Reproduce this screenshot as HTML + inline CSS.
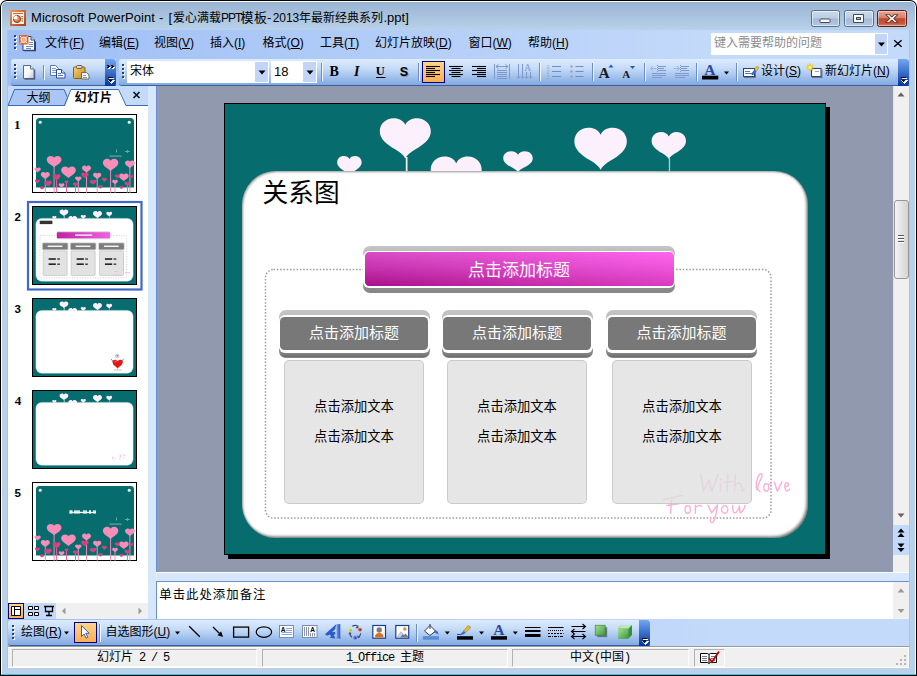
<!DOCTYPE html>
<html lang="zh-CN"><head><meta charset="utf-8"><title>Microsoft PowerPoint</title>
<style>
*{box-sizing:border-box;margin:0;padding:0}
html,body{width:917px;height:676px;overflow:hidden;background:#fff}
body{font-family:"Liberation Sans","Noto Sans CJK SC",sans-serif;font-size:12px;color:#000;position:relative}
#w div,#w span.t,#w svg.a{position:absolute}
#w{position:absolute;left:0;top:0;width:917px;height:676px;overflow:hidden}
span.t{white-space:nowrap;line-height:1;display:block}
u{text-decoration:underline;text-underline-offset:1px}

.tb{background:linear-gradient(#ddecfe 0%,#c6dcf8 35%,#81a9e2 100%);border-bottom:1px solid #3b619c}
.ovf{background:linear-gradient(#75a6f1 0%,#0035a0 100%)}
.sep{width:2px;border-left:1px solid #6a8ccb;border-right:1px solid #f1f9ff}
.sel{background:linear-gradient(#ffd58c,#ffad55);border:1px solid #000080}
.cell{background:#f0f0f0;border:1px solid;border-color:#b2b2b2 #fdfdfd #fdfdfd #b2b2b2}
.m{font-size:12px}
</style></head>
<body>
<div id="w">
<div style="left:0px;top:0px;width:917px;height:676px;background:#000;border-radius:7px 7px 0 0"></div>
<div style="left:1px;top:1px;width:915px;height:674px;background:#fff;border-radius:6px 6px 0 0"></div>
<div style="left:2px;top:2px;width:913px;height:672px;background:#b9d1ea;border-radius:5px 5px 0 0"></div>
<div style="left:2px;top:2px;width:913px;height:28px;background:linear-gradient(#98b3d1 0%,#a9c3df 50%,#b9d1ea 100%);border-radius:5px 5px 0 0"></div>
<div style="left:909px;top:30px;width:1px;height:638px;background:#aac4e2"></div>
<div style="left:1px;top:674px;width:915px;height:1px;background:#2fc8dc"></div>
<div style="left:7px;top:30px;width:1px;height:638px;background:#aac4e2"></div>
<svg class="a" style="left:10px;top:10px;" width="16" height="16" viewBox="0 0 16 16"><defs><linearGradient id="tig" x1="0" y1="0" x2="1" y2="1"><stop offset="0" stop-color="#f09860"/><stop offset="1" stop-color="#a83c14"/></linearGradient><radialGradient id="tir" cx=".4" cy=".35" r=".7"><stop offset="0" stop-color="#ffd0a8"/><stop offset="1" stop-color="#c85420"/></radialGradient></defs><rect x="0" y="0" width="16" height="16" fill="url(#tig)"/><rect x="2" y="2" width="12" height="12" fill="#fdf3ea"/><rect x="3" y="3" width="10" height="1" fill="#d2622c"/><circle cx="7" cy="9" r="3.6" fill="url(#tir)" stroke="#8c2c0c" stroke-width=".9"/><path d="M7 9V5.4A3.6 3.6 0 0 0 3.400 9z" fill="#fff"/><rect x="11.5" y="6" width="1.2" height="1.2" fill="#8c2c0c"/><rect x="11.5" y="8.2" width="1.2" height="1.2" fill="#8c2c0c"/><rect x="11.5" y="10.4" width="1.2" height="1.2" fill="#8c2c0c"/></svg>
<span class="t" style="left:31px;top:11px;font-size:13px;letter-spacing:.06px">Microsoft PowerPoint</span>
<span class="t" style="left:159px;top:11px;font-size:13px;">-</span>
<span class="t" style="left:168.5px;top:11px;font-size:13px;">[</span>
<span class="t" style="left:173px;top:11.5px;font-size:12px;">爱心满载</span>
<span class="t" style="left:221px;top:11.5px;font-size:12px;letter-spacing:-1px">PPT</span>
<span class="t" style="left:240.6px;top:11px;font-size:13px;letter-spacing:.3px">模板</span>
<span class="t" style="left:267px;top:11px;font-size:13px;">-</span>
<span class="t" style="left:272.8px;top:11.5px;font-size:12px;letter-spacing:-.1px">2013</span>
<span class="t" style="left:299px;top:11.5px;font-size:12px;">年最新经典系列</span>
<span class="t" style="left:383.5px;top:11px;font-size:13px;">.ppt]</span>
<div style="left:810.5px;top:10px;width:29.5px;height:17px;border:1px solid #56708f;border-radius:2.5px;box-shadow:inset 0 0 0 1px rgba(255,255,255,.55);background:linear-gradient(#cbd9ea 0%,#bccde2 48%,#a3b9d6 52%,#b3c8e2 100%)"></div>
<div style="left:843.5px;top:10px;width:30px;height:17px;border:1px solid #56708f;border-radius:2.5px;box-shadow:inset 0 0 0 1px rgba(255,255,255,.55);background:linear-gradient(#cbd9ea 0%,#bccde2 48%,#a3b9d6 52%,#b3c8e2 100%)"></div>
<div style="left:876.5px;top:10px;width:30.5px;height:17px;border:1px solid #5a1c14;border-radius:2.5px;box-shadow:inset 0 0 0 1px rgba(255,255,255,.4);background:linear-gradient(#e6a99a 0%,#d4806c 45%,#c1462c 52%,#c85a40 85%,#d88468 100%)"></div>
<svg class="a" style="left:810px;top:10px;" width="97" height="17" viewBox="0 0 97 17"><rect x="10" y="9" width="10" height="3.5" rx=".8" fill="#fff" stroke="#404a5c" stroke-width="1"/><path d="M43.5 4.500h10v8h-10z" fill="#fff" stroke="#404a5c" stroke-width="1"/><rect x="46.5" y="7.5" width="4" height="2" fill="#9fbcdc" stroke="#404a5c" stroke-width="1"/><path d="M76.3 4.200h3.200l2.300 2.600 2.300-2.600h3.200l-3.800 4.300 3.800 4.300h-3.200l-2.300-2.600-2.300 2.600h-3.200l3.800-4.300z" fill="#fff" stroke="#5c2a22" stroke-width=".9" stroke-linejoin="round" transform="translate(81.8 8.5) scale(1.12 .92) translate(-81.8 -8.5)"/></svg>
<div style="left:8px;top:30px;width:901px;height:29px;background:linear-gradient(90deg,#9ebef5 0px,#c4dafa 720px)"></div>
<svg class="a" style="left:14px;top:35px;" width="3" height="16" viewBox="0 0 3 16"><rect x="1" y="1" width="2" height="2" fill="#fff"/><rect x="0" y="0" width="2" height="2" fill="#274176"/><rect x="1" y="5" width="2" height="2" fill="#fff"/><rect x="0" y="4" width="2" height="2" fill="#274176"/><rect x="1" y="9" width="2" height="2" fill="#fff"/><rect x="0" y="8" width="2" height="2" fill="#274176"/><rect x="1" y="13" width="2" height="2" fill="#fff"/><rect x="0" y="12" width="2" height="2" fill="#274176"/></svg>
<svg class="a" style="left:19px;top:34px;" width="17" height="18" viewBox="0 0 17 18"><path d="M4 2.500h8l3.500 3.500v10.500h-11.500z" fill="#fff" stroke="#2c4470" stroke-width="1"/><path d="M12 2.500v3.500h3.500" fill="#dfe9f8" stroke="#2c4470" stroke-width="1"/><path d="M5 16.500h11.500v-9" fill="none" stroke="#2c4470" stroke-width="1.6"/><path d="M10 8.500h4M10 10.500h4M7 12.500h7M7 14.500h5" stroke="#6c8cc8" stroke-width="1"/><rect x="0" y="1" width="9.500" height="9.500" fill="#d86834"/><circle cx="4.7" cy="5.7" r="2.8" fill="#f4b088" stroke="#fff" stroke-width=".8"/><path d="M1 2l1.800 1.800M8.500 2l-1.800 1.800M1 9.500l1.800-1.800M8.500 9.500l-1.800-1.800" stroke="#fff" stroke-width="1"/></svg>
<span class="t m" style="left:45px;top:37px">文件(<u>F</u>)</span>
<span class="t m" style="left:99px;top:37px">编辑(<u>E</u>)</span>
<span class="t m" style="left:154px;top:37px">视图(<u>V</u>)</span>
<span class="t m" style="left:210px;top:37px">插入(<u>I</u>)</span>
<span class="t m" style="left:262.5px;top:37px">格式(<u>O</u>)</span>
<span class="t m" style="left:320px;top:37px">工具(<u>T</u>)</span>
<span class="t m" style="left:375px;top:37px">幻灯片放映(<u>D</u>)</span>
<span class="t m" style="left:468.5px;top:37px">窗口(<u>W</u>)</span>
<span class="t m" style="left:528px;top:37px">帮助(<u>H</u>)</span>
<div style="left:711px;top:33px;width:177px;height:22px;background:#fff"></div>
<div style="left:875px;top:34px;width:12px;height:20px;background:#c2d5f6"></div>
<svg class="a" style="left:875px;top:33px;" width="13" height="22" viewBox="0 0 13 22"><path d="M3 9.500h7l-3.500 4z" fill="#000"/></svg>
<span class="t" style="left:714px;top:37px;font-size:12px;color:#8c8c8c">键入需要帮助的问题</span>
<svg class="a" style="left:893px;top:39px;" width="10" height="9" viewBox="0 0 10 9"><path d="M1.200 1.200l7.400 6.600M8.600 1.200l-7.400 6.600" stroke="#000" stroke-width="1.4"/></svg>
<div style="left:8px;top:57px;width:901px;height:29px;background:linear-gradient(90deg,#9ebef5 0px,#c4dafa 720px)"></div>
<div class="tb" style="left:11px;top:59px;width:105px;height:27px;border-radius:3px 0 0 3px"></div>
<div class="ovf" style="left:105px;top:59px;width:11px;height:27px;border-radius:0 3px 3px 0"></div>
<svg class="a" style="left:105px;top:59px;" width="11" height="27" viewBox="0 0 11 27"><path d="M2 5h2v1h1v1h-1v1h-2v-1h1v-1h-1zM6 5h2v1h1v1h-1v1h-2v-1h1v-1h-1z" fill="#fff" transform="translate(1,2)"/><path d="M2 5h2v1h1v1h-1v1h-2v-1h1v-1h-1zM6 5h2v1h1v1h-1v1h-2v-1h1v-1h-1z" fill="#000" transform="translate(0,1)"/><path d="M4 19.500h5M3.500 21.500h6l-3 3z" fill="#fff" stroke="#fff" stroke-width="1"/><path d="M3 18.500h5" stroke="#000" stroke-width="1"/><path d="M3 20.500h5l-2.500 2.800z" fill="#000"/></svg>
<svg class="a" style="left:14px;top:64px;" width="3" height="16" viewBox="0 0 3 16"><rect x="1" y="1" width="2" height="2" fill="#fff"/><rect x="0" y="0" width="2" height="2" fill="#274176"/><rect x="1" y="5" width="2" height="2" fill="#fff"/><rect x="0" y="4" width="2" height="2" fill="#274176"/><rect x="1" y="9" width="2" height="2" fill="#fff"/><rect x="0" y="8" width="2" height="2" fill="#274176"/><rect x="1" y="13" width="2" height="2" fill="#fff"/><rect x="0" y="12" width="2" height="2" fill="#274176"/></svg>
<div class="tb" style="left:119px;top:59px;width:790px;height:27px;border-radius:3px 0 0 3px"></div>
<div class="ovf" style="left:898px;top:59px;width:11px;height:27px;border-radius:0 3px 3px 0"></div>
<svg class="a" style="left:898px;top:59px;" width="11" height="27" viewBox="0 0 11 27"><path d="M4 19.500h5M3.500 21.500h6l-3 3z" fill="#fff" stroke="#fff" stroke-width="1"/><path d="M3 18.500h5" stroke="#000" stroke-width="1"/><path d="M3 20.500h5l-2.500 2.800z" fill="#000"/></svg>
<svg class="a" style="left:122px;top:64px;" width="3" height="16" viewBox="0 0 3 16"><rect x="1" y="1" width="2" height="2" fill="#fff"/><rect x="0" y="0" width="2" height="2" fill="#274176"/><rect x="1" y="5" width="2" height="2" fill="#fff"/><rect x="0" y="4" width="2" height="2" fill="#274176"/><rect x="1" y="9" width="2" height="2" fill="#fff"/><rect x="0" y="8" width="2" height="2" fill="#274176"/><rect x="1" y="13" width="2" height="2" fill="#fff"/><rect x="0" y="12" width="2" height="2" fill="#274176"/></svg>
<div style="left:127px;top:61px;width:142px;height:22px;background:#fff"></div>
<div style="left:255px;top:62px;width:13px;height:20px;background:#c2d5f6"></div>
<svg class="a" style="left:255px;top:61px;" width="14" height="22" viewBox="0 0 14 22"><path d="M3.500 9.500h7l-3.500 4z" fill="#000"/></svg>
<span class="t" style="left:130px;top:65px;font-size:12px">宋体</span>
<div style="left:271px;top:61px;width:46px;height:22px;background:#fff"></div>
<div style="left:303px;top:62px;width:13px;height:20px;background:#c2d5f6"></div>
<svg class="a" style="left:303px;top:61px;" width="14" height="22" viewBox="0 0 14 22"><path d="M3.500 9.500h7l-3.500 4z" fill="#000"/></svg>
<span class="t" style="left:274px;top:65px;font-size:13px">18</span>
<div class="sep" style="left:320.5px;top:63px;width:2px;height:18px;"></div>
<div class="sep" style="left:418px;top:63px;width:2px;height:18px;"></div>
<div class="sep" style="left:539px;top:63px;width:2px;height:18px;"></div>
<div class="sep" style="left:591.5px;top:63px;width:2px;height:18px;"></div>
<div class="sep" style="left:644px;top:63px;width:2px;height:18px;"></div>
<div class="sep" style="left:696px;top:63px;width:2px;height:18px;"></div>
<div class="sep" style="left:735.5px;top:63px;width:2px;height:18px;"></div>
<div class="sel" style="left:422px;top:61px;width:23px;height:22px;"></div>
<span class="t" style="left:761px;top:65px;font-size:12px">设计(<u>S</u>)</span>
<span class="t" style="left:825px;top:65px;font-size:12px">新幻灯片(<u>N</u>)</span>
<div style="left:8px;top:86px;width:140px;height:533px;background:#fff"></div>
<div style="left:8px;top:86px;width:140px;height:20px;background:#c3daf9"></div>
<div style="left:148px;top:86px;width:9px;height:533px;background:#d6e6fb"></div>
<div style="left:156px;top:86px;width:1px;height:486px;background:#6b8fd6"></div>
<svg class="a" style="left:0px;top:0px;" width="160" height="110" viewBox="0 0 160 110"><path d="M8 105.500L14.500 89.500H64L67.500 97.500 64.500 105.500z" fill="#a9c6f5" stroke="#3c68b8" stroke-width="1"/><path d="M64.500 106L71 89.500H118.500L126 105.500H148" fill="none" stroke="#3c68b8" stroke-width="1"/><path d="M65 106L71.300 90H118.200L125.500 106z" fill="#fff"/><path d="M133.500 92l6 6M139.500 92l-6 6" stroke="#111" stroke-width="1.600"/></svg>
<span class="t" style="left:26.5px;top:92px;font-size:12px">大纲</span>
<span class="t" style="left:74.500px;top:92px;font-size:12px;letter-spacing:.8px;font-weight:bold">幻灯片</span>
<div style="left:157px;top:86px;width:736px;height:486px;background:#9099ae"></div>
<div style="left:893px;top:86px;width:16px;height:439px;background:#f0f0f0"></div>
<div style="left:893px;top:86px;width:1px;height:486px;background:#e3e3e3"></div>
<div style="left:894px;top:200px;width:14.5px;height:79px;border:1px solid #979797;border-radius:3px;background:linear-gradient(90deg,#f4f4f4,#e3e3e3 50%,#d4d4d4)"></div>
<svg class="a" style="left:893px;top:86px;" width="16" height="486" viewBox="0 0 16 486"><path d="M4.500 10.500l3.500-4 3.500 4z" fill="#606060"/><path d="M4.500 427.500l3.500 4 3.500-4z" fill="#606060"/><path d="M5 149.500h6M5 152.500h6M5 155.500h6" stroke="#5a5a5a" stroke-width="1"/><path d="M5 150.500h6M5 153.500h6M5 156.500h6" stroke="#fff" stroke-width="1"/></svg>
<div style="left:893px;top:525px;width:16px;height:30px;background:#c4dafa"></div>
<svg class="a" style="left:893px;top:525px;" width="16" height="30" viewBox="0 0 16 30"><path d="M4.500 7.500l3.500-4 3.500 4zM4.500 12l3.500-4 3.500 4z" fill="#000"/><path d="M4.500 18.500l3.500 4 3.500-4zM4.500 23l3.500 4 3.500-4z" fill="#000"/></svg>
<div style="left:893px;top:555px;width:16px;height:17px;background:#f0f0f0"></div>
<div style="left:157px;top:572px;width:752px;height:10px;background:#d6e6fb"></div>
<div style="left:156px;top:572px;width:753px;height:1px;background:#fbfdff"></div>
<div style="left:156px;top:573px;width:1px;height:8px;background:#ececec"></div>
<div style="left:156px;top:581px;width:753px;height:1px;background:#6b8fd6"></div>
<div style="left:156px;top:581px;width:1px;height:38px;background:#6b8fd6"></div>
<div style="left:157px;top:582px;width:736px;height:37px;background:#fff"></div>
<div style="left:893px;top:582px;width:16px;height:37px;background:#f0f0f0"></div>
<svg class="a" style="left:893px;top:582px;" width="16" height="37" viewBox="0 0 16 37"><path d="M4.500 10.500l3.500-4 3.500 4z" fill="#9a9a9a"/><path d="M4.500 27l3.500 4 3.500-4z" fill="#9a9a9a"/></svg>
<span class="t thin" style="left:159.3px;top:588.5px;font-size:12.4px;letter-spacing:1px">单击此处添加备注</span>
<div style="left:8px;top:603px;width:48px;height:16px;background:#c4dafa"></div>
<div style="left:56px;top:603px;width:92px;height:16px;background:#f0f0f0"></div>
<div class="sel" style="left:8px;top:603px;width:16px;height:16px;"></div>
<svg class="a" style="left:8px;top:603px;" width="140" height="16" viewBox="0 0 140 16"><path d="M3.500 3.500h9v9h-9zM6.500 3.500v9M6.500 6.500h6" fill="#fff" stroke="#000" stroke-width="1"/><path d="M20.500 3.500h4v3h-4zM26.500 3.500h4v3h-4zM20.500 9.500h4v3h-4zM26.500 9.500h4v3h-4z" fill="#fff" stroke="#000" stroke-width="1"/><path d="M36 3.500h10M37.500 4v4.500h7V4M41 9v3M38 12.500h6" fill="none" stroke="#000" stroke-width="1.300"/><path d="M54 8l3.500-3.500v7z" fill="#9a9a9a"/><path d="M134 8l-3.500-3.500v7z" fill="#9a9a9a"/></svg>
<div style="left:8px;top:619px;width:901px;height:28px;background:linear-gradient(90deg,#9ebef5 0px,#c4dafa 720px)"></div>
<div class="tb" style="left:8px;top:619.5px;width:642px;height:26.5px;border-radius:3px 0 0 3px"></div>
<div class="ovf" style="left:639px;top:619.5px;width:11px;height:26.5px;border-radius:0 3px 3px 0"></div>
<svg class="a" style="left:639px;top:620px;" width="11" height="27" viewBox="0 0 11 27"><path d="M4 19.500h5M3.500 21.500h6l-3 3z" fill="#fff" stroke="#fff" stroke-width="1"/><path d="M3 18.500h5" stroke="#000" stroke-width="1"/><path d="M3 20.500h5l-2.500 2.800z" fill="#000"/></svg>
<svg class="a" style="left:12px;top:625px;" width="3" height="16" viewBox="0 0 3 16"><rect x="1" y="1" width="2" height="2" fill="#fff"/><rect x="0" y="0" width="2" height="2" fill="#274176"/><rect x="1" y="5" width="2" height="2" fill="#fff"/><rect x="0" y="4" width="2" height="2" fill="#274176"/><rect x="1" y="9" width="2" height="2" fill="#fff"/><rect x="0" y="8" width="2" height="2" fill="#274176"/><rect x="1" y="13" width="2" height="2" fill="#fff"/><rect x="0" y="12" width="2" height="2" fill="#274176"/></svg>
<span class="t" style="left:21px;top:626px;font-size:12px">绘图(<u>R</u>)</span>
<svg class="a" style="left:63px;top:630px;" width="8" height="6" viewBox="0 0 8 6"><path d="M1 1.500h5l-2.500 3z" fill="#000"/></svg>
<div class="sel" style="left:74px;top:621.5px;width:23px;height:21.5px;"></div>
<div class="sep" style="left:99px;top:624px;width:2px;height:18px;"></div>
<span class="t" style="left:105.5px;top:626px;font-size:12px">自选图形(<u>U</u>)</span>
<svg class="a" style="left:174px;top:630px;" width="8" height="6" viewBox="0 0 8 6"><path d="M1 1.500h5l-2.500 3z" fill="#000"/></svg>
<div class="sep" style="left:416px;top:624px;width:2px;height:18px;"></div>
<div style="left:8px;top:647px;width:901px;height:21px;background:#f0f0f0"></div>
<div style="left:8px;top:646px;width:901px;height:1px;background:#9a9a9a"></div>
<div style="left:8px;top:647px;width:901px;height:1px;background:#fff"></div>
<div style="left:908px;top:647px;width:1px;height:21px;background:#fff"></div>
<div style="left:8px;top:667px;width:901px;height:1px;background:#fff"></div>
<div class="cell" style="left:12px;top:649px;width:245px;height:18px;"></div>
<div class="cell" style="left:262px;top:649px;width:246px;height:18px;"></div>
<div class="cell" style="left:512px;top:649px;width:177px;height:18px;"></div>
<div class="cell" style="left:694px;top:649px;width:31px;height:18px;"></div>
<span class="t" style="left:97px;top:652px;font-size:12px;font-family:'Liberation Mono','Noto Sans CJK SC',monospace;letter-spacing:-1.200px"><span style="letter-spacing:0">幻灯片</span> 2 / 5</span>
<span class="t" style="left:346px;top:652px;font-size:12px;font-family:'Liberation Mono','Noto Sans CJK SC',monospace;letter-spacing:-1.200px">1_Office <span style="letter-spacing:0">主题</span></span>
<span class="t" style="left:570px;top:652px;font-size:12px;font-family:'Liberation Mono','Noto Sans CJK SC',monospace;letter-spacing:-1.200px"><span style="letter-spacing:0">中文</span>(<span style="letter-spacing:0">中国</span>)</span>
<svg class="a" style="left:699px;top:650px;" width="22" height="16" viewBox="0 0 22 16"><path d="M1.500 3.500h7l1.500 1 1.500-1h6v9h-6l-1.500 1-1.500-1h-7z" fill="#fff" stroke="#000" stroke-width="1"/><path d="M10 4.500v8.500" stroke="#000"/><path d="M3 6.500h5M3 8.500h5M3 10.500h5M12 6.500h4M12 8.500h4M12 10.500h4" stroke="#555" stroke-width=".8"/><path d="M10 8l3 4L20 1.500" fill="none" stroke="#c00000" stroke-width="1.800"/></svg>
<svg class="a" style="left:896px;top:655px;" width="12" height="12" viewBox="0 0 12 12"><g fill="#b8b8b8"><rect x="8" y="0" width="2" height="2"/><rect x="4" y="4" width="2" height="2"/><rect x="8" y="4" width="2" height="2"/><rect x="0" y="8" width="2" height="2"/><rect x="4" y="8" width="2" height="2"/><rect x="8" y="8" width="2" height="2"/></g></svg>
<div style="left:224px;top:103px;width:602px;height:452px;background:#066c6e;border:1px solid #000;box-shadow:4px 4px 0 #000"></div>
<svg class="a" style="left:0px;top:0px;" width="917" height="200" viewBox="0 0 917 200"><path d="M50 13C46 5 38 0 27 0C12 0 0 11 0 26C0 42 14 52 30 62C40 68 47 74 50 80C53 74 60 68 70 62C86 52 100 42 100 26C100 11 88 0 73 0C62 0 54 5 50 13Z" fill="#fdf0fd" transform="translate(337.15 155.90) scale(0.2450 0.2450)"/><path d="M50 13C46 5 38 0 27 0C12 0 0 11 0 26C0 42 14 52 30 62C40 68 47 74 50 80C53 74 60 68 70 62C86 52 100 42 100 26C100 11 88 0 73 0C62 0 54 5 50 13Z" fill="#fdf0fd" transform="translate(379.80 118.20) scale(0.5100 0.5025)"/><rect x="405.800" y="157" width="1.700" height="15" fill="#fdf0fd"/><path d="M50 13C46 5 38 0 27 0C12 0 0 11 0 26C0 42 14 52 30 62C40 68 47 74 50 80C53 74 60 68 70 62C86 52 100 42 100 26C100 11 88 0 73 0C62 0 54 5 50 13Z" fill="#fdf0fd" transform="translate(430.70 156.60) scale(0.5100 0.5100)"/><path d="M50 13C46 5 38 0 27 0C12 0 0 11 0 26C0 42 14 52 30 62C40 68 47 74 50 80C53 74 60 68 70 62C86 52 100 42 100 26C100 11 88 0 73 0C62 0 54 5 50 13Z" fill="#fdf0fd" transform="translate(503.25 151.30) scale(0.2950 0.2625)"/><path d="M50 13C46 5 38 0 27 0C12 0 0 11 0 26C0 42 14 52 30 62C40 68 47 74 50 80C53 74 60 68 70 62C86 52 100 42 100 26C100 11 88 0 73 0C62 0 54 5 50 13Z" fill="#fdf0fd" transform="translate(574.35 127.80) scale(0.5250 0.5250)"/><path d="M50 13C46 5 38 0 27 0C12 0 0 11 0 26C0 42 14 52 30 62C40 68 47 74 50 80C53 74 60 68 70 62C86 52 100 42 100 26C100 11 88 0 73 0C62 0 54 5 50 13Z" fill="#fdf0fd" transform="translate(651.65 132.10) scale(0.3430 0.3375)"/><rect x="668.800" y="158" width="1.300" height="14" fill="#a8d2d2"/></svg>
<div style="left:242px;top:170.5px;width:566px;height:367px;background:#fff;border-radius:34px;box-shadow:inset -1.500px -1.500px 3px rgba(0,0,0,.55),inset 1px 1px 2.500px rgba(0,0,0,.38)"></div>
<span class="t big" style="left:262.6px;top:181.2px;font-size:25.700px">关系图</span>
<svg class="a" style="left:260px;top:264px;" width="520" height="260" viewBox="0 0 520 260"><rect x="5.500" y="5.500" width="505.500" height="248.500" rx="8" fill="none" stroke="#9a9a9a" stroke-width="1.5" stroke-dasharray="1.5 1.8"/></svg>
<svg class="a" style="left:0px;top:0px;" width="917" height="676" viewBox="0 0 917 676"><g fill="none" stroke="#fbaed8" stroke-width="8.500" stroke-linecap="round" stroke-linejoin="round" transform="translate(655 465) scale(0.16359)"><path d="M280 55L296 160L330 92L346 160L386 58"/><path d="M402 118L400 160"/><circle cx="404" cy="88" r="3" fill="#fbaed8"/><path d="M446 58L440 160M420 106L472 100"/><path d="M492 58L485 160M486 135C500 100 528 95 534 160L546 150"/><path d="M622 150C610 100 640 35 654 58C662 78 622 112 628 150L642 162"/><ellipse cx="680" cy="137" rx="15" ry="23"/><path d="M694 118L712 112"/><path d="M730 105L748 160L776 103"/><path d="M793 136L817 124C816 100 788 104 795 142C799 168 816 160 824 148"/><path d="M50 212L166 186M102 198L95 296M72 247L146 238"/><ellipse cx="200" cy="272" rx="16" ry="23"/><path d="M246 246L247 296M247 262C256 246 270 244 284 252"/><path d="M324 246L346 292L382 244C378 280 372 310 364 334C354 362 332 356 340 328"/><ellipse cx="426" cy="272" rx="19" ry="23"/><path d="M474 248L478 284C486 302 506 290 516 250L520 292C530 290 544 270 552 248"/></g></svg>
<div style="left:363px;top:245.5px;width:312px;height:47px;border-radius:7px;background:linear-gradient(#c6c6c6 0,#bdbdbd 5px,#8c8c8c 42px,#858585 47px)"></div>
<div style="left:363px;top:250.5px;width:312px;height:37px;border-radius:6px;background:#fff"></div>
<div style="left:364.5px;top:252px;width:309px;height:34px;border-radius:4.500px;background:linear-gradient(90deg,#d94cc5 0%,#ec58da 50%,#ff66ee 100%);color:#fff;overflow:hidden;font-size:17px;text-align:center;line-height:37px;white-space:nowrap"><div style="left:0;top:0;width:309px;height:34px;background:linear-gradient(90deg,#a80f8a 0%,#c02aa6 50%,#d73cbe 100%);-webkit-mask-image:linear-gradient(180deg,rgba(0,0,0,0) 0%,rgba(0,0,0,.35) 40%,#000 100%);mask-image:linear-gradient(180deg,rgba(0,0,0,0) 0%,rgba(0,0,0,.35) 40%,#000 100%)"></div><span style="position:relative">点击添加标题</span></div>
<div style="left:284px;top:359.5px;width:140px;height:144.5px;border-radius:5px;background:rgba(222,222,222,.76);border:1px solid rgba(150,150,150,.35)"></div>
<div style="left:278.5px;top:310px;width:151px;height:48px;border-radius:7px;background:linear-gradient(#c4c4c4 0,#c0c0c0 5px,#8a8a8a 42px,#6e6e6e 47px,#9a9a9a 48px)"></div>
<div style="left:278.5px;top:315px;width:151px;height:37.5px;border-radius:6px;background:#fff"></div>
<div style="left:280px;top:317px;width:148px;height:33px;border-radius:4.500px;background:#787878;color:#fff;font-size:15px;text-align:center;line-height:32px;white-space:nowrap"><span>点击添加标题</span></div>
<div style="left:284px;top:400px;width:140px;height:14px;font-size:13.300px;text-align:center;line-height:14px;white-space:nowrap"><span>点击添加文本</span></div>
<div style="left:284px;top:430px;width:140px;height:14px;font-size:13.300px;text-align:center;line-height:14px;white-space:nowrap"><span>点击添加文本</span></div>
<div style="left:447px;top:359.5px;width:140px;height:144.5px;border-radius:5px;background:rgba(222,222,222,.76);border:1px solid rgba(150,150,150,.35)"></div>
<div style="left:441.5px;top:310px;width:151px;height:48px;border-radius:7px;background:linear-gradient(#c4c4c4 0,#c0c0c0 5px,#8a8a8a 42px,#6e6e6e 47px,#9a9a9a 48px)"></div>
<div style="left:441.5px;top:315px;width:151px;height:37.5px;border-radius:6px;background:#fff"></div>
<div style="left:443px;top:317px;width:148px;height:33px;border-radius:4.500px;background:#787878;color:#fff;font-size:15px;text-align:center;line-height:32px;white-space:nowrap"><span>点击添加标题</span></div>
<div style="left:447px;top:400px;width:140px;height:14px;font-size:13.300px;text-align:center;line-height:14px;white-space:nowrap"><span>点击添加文本</span></div>
<div style="left:447px;top:430px;width:140px;height:14px;font-size:13.300px;text-align:center;line-height:14px;white-space:nowrap"><span>点击添加文本</span></div>
<div style="left:612px;top:359.5px;width:140px;height:144.5px;border-radius:5px;background:rgba(222,222,222,.76);border:1px solid rgba(150,150,150,.35)"></div>
<div style="left:606px;top:310px;width:151px;height:48px;border-radius:7px;background:linear-gradient(#c4c4c4 0,#c0c0c0 5px,#8a8a8a 42px,#6e6e6e 47px,#9a9a9a 48px)"></div>
<div style="left:606px;top:315px;width:151px;height:37.5px;border-radius:6px;background:#fff"></div>
<div style="left:607.5px;top:317px;width:148px;height:33px;border-radius:4.500px;background:#787878;color:#fff;font-size:15px;text-align:center;line-height:32px;white-space:nowrap"><span>点击添加标题</span></div>
<div style="left:612px;top:400px;width:140px;height:14px;font-size:13.300px;text-align:center;line-height:14px;white-space:nowrap"><span>点击添加文本</span></div>
<div style="left:612px;top:430px;width:140px;height:14px;font-size:13.300px;text-align:center;line-height:14px;white-space:nowrap"><span>点击添加文本</span></div>
<svg class="a" style="left:0px;top:0px;" width="160" height="600" viewBox="0 0 160 600"><defs><linearGradient id="mpk" x1="0" y1="0" x2="1" y2="0"><stop offset="0" stop-color="#c020a4"/><stop offset="1" stop-color="#f460e4"/></linearGradient></defs><rect x="32.500" y="114.5" width="104" height="78" fill="#fff" stroke="#000" stroke-width="1"/><path d="M36 187.500v-66a3.500 3.500 0 0 1 3.500-3.500h91a3.500 3.500 0 0 1 3.500 3.500v66z" fill="#066c6e"/><circle cx="40.200" cy="122.3" r="1.500" fill="#fff"/><circle cx="129.200" cy="122.3" r="1.500" fill="#fff"/><rect x="53.6" y="161.8" width="1" height="31.0" fill="#f58ab4"/><rect x="110.1" y="165.0" width="1" height="27.8" fill="#f58ab4"/><rect x="129.4" y="164.3" width="1" height="28.5" fill="#f58ab4"/><rect x="86.0" y="169.2" width="1" height="23.6" fill="#f58ab4"/><rect x="44.8" y="175.7" width="1" height="17.1" fill="#f58ab4"/><rect x="96.7" y="176.0" width="1" height="16.8" fill="#f58ab4"/><rect x="56.1" y="177.3" width="1" height="15.5" fill="#f0609c"/><rect x="77.8" y="179.0" width="1" height="13.8" fill="#f58ab4"/><rect x="114.5" y="182.0" width="1" height="10.8" fill="#f58ab4"/><rect x="66.0" y="182.2" width="1" height="10.6" fill="#f0609c"/><rect x="126.9" y="184.0" width="1" height="8.8" fill="#f0609c"/><rect x="75.0" y="184.5" width="1" height="8.3" fill="#f0609c"/><path d="M50 13C46 5 38 0 27 0C12 0 0 11 0 26C0 42 14 52 30 62C40 68 47 74 50 80C53 74 60 68 70 62C86 52 100 42 100 26C100 11 88 0 73 0C62 0 54 5 50 13Z" fill="#f78db8" transform="translate(46.75 155.92) scale(0.1470 0.1470)"/><path d="M50 13C46 5 38 0 27 0C12 0 0 11 0 26C0 42 14 52 30 62C40 68 47 74 50 80C53 74 60 68 70 62C86 52 100 42 100 26C100 11 88 0 73 0C62 0 54 5 50 13Z" fill="#f78db8" transform="translate(61.15 166.52) scale(0.1470 0.1470)"/><path d="M50 13C46 5 38 0 27 0C12 0 0 11 0 26C0 42 14 52 30 62C40 68 47 74 50 80C53 74 60 68 70 62C86 52 100 42 100 26C100 11 88 0 73 0C62 0 54 5 50 13Z" fill="#f78db8" transform="translate(102.85 158.80) scale(0.1550 0.1550)"/><path d="M50 13C46 5 38 0 27 0C12 0 0 11 0 26C0 42 14 52 30 62C40 68 47 74 50 80C53 74 60 68 70 62C86 52 100 42 100 26C100 11 88 0 73 0C62 0 54 5 50 13Z" fill="#f78db8" transform="translate(125.00 160.38) scale(0.0980 0.0980)"/><path d="M50 13C46 5 38 0 27 0C12 0 0 11 0 26C0 42 14 52 30 62C40 68 47 74 50 80C53 74 60 68 70 62C86 52 100 42 100 26C100 11 88 0 73 0C62 0 54 5 50 13Z" fill="#f78db8" transform="translate(82.00 165.60) scale(0.0900 0.0900)"/><path d="M50 13C46 5 38 0 27 0C12 0 0 11 0 26C0 42 14 52 30 62C40 68 47 74 50 80C53 74 60 68 70 62C86 52 100 42 100 26C100 11 88 0 73 0C62 0 54 5 50 13Z" fill="#f78db8" transform="translate(40.80 172.10) scale(0.0900 0.0900)"/><path d="M50 13C46 5 38 0 27 0C12 0 0 11 0 26C0 42 14 52 30 62C40 68 47 74 50 80C53 74 60 68 70 62C86 52 100 42 100 26C100 11 88 0 73 0C62 0 54 5 50 13Z" fill="#f78db8" transform="translate(34.35 167.40) scale(0.0650 0.0650)"/><path d="M50 13C46 5 38 0 27 0C12 0 0 11 0 26C0 42 14 52 30 62C40 68 47 74 50 80C53 74 60 68 70 62C86 52 100 42 100 26C100 11 88 0 73 0C62 0 54 5 50 13Z" fill="#f78db8" transform="translate(93.10 172.72) scale(0.0820 0.0820)"/><path d="M50 13C46 5 38 0 27 0C12 0 0 11 0 26C0 42 14 52 30 62C40 68 47 74 50 80C53 74 60 68 70 62C86 52 100 42 100 26C100 11 88 0 73 0C62 0 54 5 50 13Z" fill="#f78db8" transform="translate(118.90 173.38) scale(0.0980 0.0980)"/><path d="M50 13C46 5 38 0 27 0C12 0 0 11 0 26C0 42 14 52 30 62C40 68 47 74 50 80C53 74 60 68 70 62C86 52 100 42 100 26C100 11 88 0 73 0C62 0 54 5 50 13Z" fill="#d9407e" transform="translate(52.60 174.10) scale(0.0800 0.0800)"/><path d="M50 13C46 5 38 0 27 0C12 0 0 11 0 26C0 42 14 52 30 62C40 68 47 74 50 80C53 74 60 68 70 62C86 52 100 42 100 26C100 11 88 0 73 0C62 0 54 5 50 13Z" fill="#d9407e" transform="translate(81.15 172.40) scale(0.0750 0.0750)"/><path d="M50 13C46 5 38 0 27 0C12 0 0 11 0 26C0 42 14 52 30 62C40 68 47 74 50 80C53 74 60 68 70 62C86 52 100 42 100 26C100 11 88 0 73 0C62 0 54 5 50 13Z" fill="#d9407e" transform="translate(44.25 180.60) scale(0.0750 0.0750)"/><path d="M50 13C46 5 38 0 27 0C12 0 0 11 0 26C0 42 14 52 30 62C40 68 47 74 50 80C53 74 60 68 70 62C86 52 100 42 100 26C100 11 88 0 73 0C62 0 54 5 50 13Z" fill="#d9407e" transform="translate(89.75 179.70) scale(0.0650 0.0650)"/><path d="M50 13C46 5 38 0 27 0C12 0 0 11 0 26C0 42 14 52 30 62C40 68 47 74 50 80C53 74 60 68 70 62C86 52 100 42 100 26C100 11 88 0 73 0C62 0 54 5 50 13Z" fill="#f78db8" transform="translate(75.05 176.40) scale(0.0650 0.0650)"/><path d="M50 13C46 5 38 0 27 0C12 0 0 11 0 26C0 42 14 52 30 62C40 68 47 74 50 80C53 74 60 68 70 62C86 52 100 42 100 26C100 11 88 0 73 0C62 0 54 5 50 13Z" fill="#d9407e" transform="translate(34.90 179.40) scale(0.0500 0.0500)"/><path d="M50 13C46 5 38 0 27 0C12 0 0 11 0 26C0 42 14 52 30 62C40 68 47 74 50 80C53 74 60 68 70 62C86 52 100 42 100 26C100 11 88 0 73 0C62 0 54 5 50 13Z" fill="#d9407e" transform="translate(102.00 177.80) scale(0.0500 0.0500)"/><path d="M50 13C46 5 38 0 27 0C12 0 0 11 0 26C0 42 14 52 30 62C40 68 47 74 50 80C53 74 60 68 70 62C86 52 100 42 100 26C100 11 88 0 73 0C62 0 54 5 50 13Z" fill="#d9407e" transform="translate(114.80 174.50) scale(0.0500 0.0500)"/><path d="M50 13C46 5 38 0 27 0C12 0 0 11 0 26C0 42 14 52 30 62C40 68 47 74 50 80C53 74 60 68 70 62C86 52 100 42 100 26C100 11 88 0 73 0C62 0 54 5 50 13Z" fill="#f78db8" transform="translate(112.15 179.72) scale(0.0570 0.0570)"/><path d="M50 13C46 5 38 0 27 0C12 0 0 11 0 26C0 42 14 52 30 62C40 68 47 74 50 80C53 74 60 68 70 62C86 52 100 42 100 26C100 11 88 0 73 0C62 0 54 5 50 13Z" fill="#f78db8" transform="translate(58.75 183.22) scale(0.0570 0.0570)"/><path d="M50 13C46 5 38 0 27 0C12 0 0 11 0 26C0 42 14 52 30 62C40 68 47 74 50 80C53 74 60 68 70 62C86 52 100 42 100 26C100 11 88 0 73 0C62 0 54 5 50 13Z" fill="#d9407e" transform="translate(64.50 180.60) scale(0.0400 0.0400)"/><path d="M50 13C46 5 38 0 27 0C12 0 0 11 0 26C0 42 14 52 30 62C40 68 47 74 50 80C53 74 60 68 70 62C86 52 100 42 100 26C100 11 88 0 73 0C62 0 54 5 50 13Z" fill="#d9407e" transform="translate(124.55 181.72) scale(0.0570 0.0570)"/><path d="M50 13C46 5 38 0 27 0C12 0 0 11 0 26C0 42 14 52 30 62C40 68 47 74 50 80C53 74 60 68 70 62C86 52 100 42 100 26C100 11 88 0 73 0C62 0 54 5 50 13Z" fill="#d9407e" transform="translate(129.50 174.90) scale(0.0400 0.0400)"/><path d="M50 13C46 5 38 0 27 0C12 0 0 11 0 26C0 42 14 52 30 62C40 68 47 74 50 80C53 74 60 68 70 62C86 52 100 42 100 26C100 11 88 0 73 0C62 0 54 5 50 13Z" fill="#d9407e" transform="translate(73.00 182.50) scale(0.0500 0.0500)"/><path d="M50 13C46 5 38 0 27 0C12 0 0 11 0 26C0 42 14 52 30 62C40 68 47 74 50 80C53 74 60 68 70 62C86 52 100 42 100 26C100 11 88 0 73 0C62 0 54 5 50 13Z" fill="#d9407e" transform="translate(98.25 185.20) scale(0.0450 0.0450)"/><path d="M50 13C46 5 38 0 27 0C12 0 0 11 0 26C0 42 14 52 30 62C40 68 47 74 50 80C53 74 60 68 70 62C86 52 100 42 100 26C100 11 88 0 73 0C62 0 54 5 50 13Z" fill="#d9407e" transform="translate(40.00 186.40) scale(0.0400 0.0400)"/><path d="M50 13C46 5 38 0 27 0C12 0 0 11 0 26C0 42 14 52 30 62C40 68 47 74 50 80C53 74 60 68 70 62C86 52 100 42 100 26C100 11 88 0 73 0C62 0 54 5 50 13Z" fill="#d9407e" transform="translate(119.50 185.90) scale(0.0400 0.0400)"/><g fill="#d8ecec" opacity=".45"><rect x="116" y="149.5" width="1" height="3"/><rect x="125" y="151" width="5" height="1"/><rect x="127" y="150" width="1" height="3"/><rect x="109.500" y="155.5" width="12" height="1.200"/></g><rect x="28" y="202" width="113.500" height="87.500" fill="#fff" stroke="#3f68c8" stroke-width="2.200"/><rect x="32.500" y="206.5" width="104" height="78" fill="#066c6e" stroke="#000" stroke-width="1"/><g transform="translate(33 207) scale(0.17167 0.1711) translate(-225 -104)"><path d="M50 13C46 5 38 0 27 0C12 0 0 11 0 26C0 42 14 52 30 62C40 68 47 74 50 80C53 74 60 68 70 62C86 52 100 42 100 26C100 11 88 0 73 0C62 0 54 5 50 13Z" fill="#fdf0fd" transform="translate(337.15 155.90) scale(0.2450 0.2450)"/><path d="M50 13C46 5 38 0 27 0C12 0 0 11 0 26C0 42 14 52 30 62C40 68 47 74 50 80C53 74 60 68 70 62C86 52 100 42 100 26C100 11 88 0 73 0C62 0 54 5 50 13Z" fill="#fdf0fd" transform="translate(379.80 118.20) scale(0.5100 0.5025)"/><path d="M50 13C46 5 38 0 27 0C12 0 0 11 0 26C0 42 14 52 30 62C40 68 47 74 50 80C53 74 60 68 70 62C86 52 100 42 100 26C100 11 88 0 73 0C62 0 54 5 50 13Z" fill="#fdf0fd" transform="translate(430.70 156.60) scale(0.5100 0.5100)"/><path d="M50 13C46 5 38 0 27 0C12 0 0 11 0 26C0 42 14 52 30 62C40 68 47 74 50 80C53 74 60 68 70 62C86 52 100 42 100 26C100 11 88 0 73 0C62 0 54 5 50 13Z" fill="#fdf0fd" transform="translate(503.25 151.30) scale(0.2950 0.2625)"/><path d="M50 13C46 5 38 0 27 0C12 0 0 11 0 26C0 42 14 52 30 62C40 68 47 74 50 80C53 74 60 68 70 62C86 52 100 42 100 26C100 11 88 0 73 0C62 0 54 5 50 13Z" fill="#fdf0fd" transform="translate(574.35 127.80) scale(0.5250 0.5250)"/><path d="M50 13C46 5 38 0 27 0C12 0 0 11 0 26C0 42 14 52 30 62C40 68 47 74 50 80C53 74 60 68 70 62C86 52 100 42 100 26C100 11 88 0 73 0C62 0 54 5 50 13Z" fill="#fdf0fd" transform="translate(651.65 132.10) scale(0.3430 0.3375)"/><rect x="404.500" y="157" width="4" height="15" fill="#fdf0fd"/><rect x="667.500" y="158" width="3" height="14" fill="#bfe0e0"/><rect x="242" y="170.500" width="566" height="367" rx="34" fill="#fff" stroke="#cfe2e2" stroke-width="2.5"/><rect x="265.500" y="269.500" width="505.500" height="248.500" rx="8" fill="none" stroke="#c4c4c4" stroke-width="5" stroke-dasharray="6 9"/><rect x="363" y="245.500" width="312" height="47" rx="7" fill="#d8d8d8"/><rect x="364" y="252" width="310" height="34" rx="4" fill="url(#mpk)"/><rect x="470" y="264" width="100" height="9" fill="#fff" opacity=".85"/><rect x="284" y="359.500" width="140" height="144.500" rx="5" fill="#e2e2e2" stroke="#c0c0c0" stroke-width="4"/><rect x="278.5" y="313" width="151" height="42" rx="6" fill="#7c7c7c" stroke="#e4e4e4" stroke-width="5"/><rect x="310.5" y="329" width="86" height="9" fill="#fff" opacity=".9"/><rect x="316" y="404" width="42" height="8" fill="#000"/><rect x="366" y="405" width="16" height="6" fill="#000"/><rect x="316" y="434" width="42" height="8" fill="#000"/><rect x="366" y="435" width="16" height="6" fill="#000"/><rect x="447" y="359.500" width="140" height="144.500" rx="5" fill="#e2e2e2" stroke="#c0c0c0" stroke-width="4"/><rect x="441.5" y="313" width="151" height="42" rx="6" fill="#7c7c7c" stroke="#e4e4e4" stroke-width="5"/><rect x="473.5" y="329" width="86" height="9" fill="#fff" opacity=".9"/><rect x="479" y="404" width="42" height="8" fill="#000"/><rect x="529" y="405" width="16" height="6" fill="#000"/><rect x="479" y="434" width="42" height="8" fill="#000"/><rect x="529" y="435" width="16" height="6" fill="#000"/><rect x="612" y="359.500" width="140" height="144.500" rx="5" fill="#e2e2e2" stroke="#c0c0c0" stroke-width="4"/><rect x="606" y="313" width="151" height="42" rx="6" fill="#7c7c7c" stroke="#e4e4e4" stroke-width="5"/><rect x="638" y="329" width="86" height="9" fill="#fff" opacity=".9"/><rect x="644" y="404" width="42" height="8" fill="#000"/><rect x="694" y="405" width="16" height="6" fill="#000"/><rect x="644" y="434" width="42" height="8" fill="#000"/><rect x="694" y="435" width="16" height="6" fill="#000"/><rect x="264" y="184" width="74" height="20" fill="#111" opacity=".85"/><g fill="#f4b4d8"><rect x="700" y="478" width="20" height="5"/><rect x="745" y="470" width="8" height="5"/><rect x="760" y="486" width="30" height="5"/><rect x="690" y="500" width="40" height="5"/></g></g><rect x="32.500" y="298.5" width="104" height="78" fill="#066c6e" stroke="#000" stroke-width="1"/><g transform="translate(33 299) scale(0.17167 0.1711) translate(-225 -104)"><path d="M50 13C46 5 38 0 27 0C12 0 0 11 0 26C0 42 14 52 30 62C40 68 47 74 50 80C53 74 60 68 70 62C86 52 100 42 100 26C100 11 88 0 73 0C62 0 54 5 50 13Z" fill="#fdf0fd" transform="translate(337.15 155.90) scale(0.2450 0.2450)"/><path d="M50 13C46 5 38 0 27 0C12 0 0 11 0 26C0 42 14 52 30 62C40 68 47 74 50 80C53 74 60 68 70 62C86 52 100 42 100 26C100 11 88 0 73 0C62 0 54 5 50 13Z" fill="#fdf0fd" transform="translate(379.80 118.20) scale(0.5100 0.5025)"/><path d="M50 13C46 5 38 0 27 0C12 0 0 11 0 26C0 42 14 52 30 62C40 68 47 74 50 80C53 74 60 68 70 62C86 52 100 42 100 26C100 11 88 0 73 0C62 0 54 5 50 13Z" fill="#fdf0fd" transform="translate(430.70 156.60) scale(0.5100 0.5100)"/><path d="M50 13C46 5 38 0 27 0C12 0 0 11 0 26C0 42 14 52 30 62C40 68 47 74 50 80C53 74 60 68 70 62C86 52 100 42 100 26C100 11 88 0 73 0C62 0 54 5 50 13Z" fill="#fdf0fd" transform="translate(503.25 151.30) scale(0.2950 0.2625)"/><path d="M50 13C46 5 38 0 27 0C12 0 0 11 0 26C0 42 14 52 30 62C40 68 47 74 50 80C53 74 60 68 70 62C86 52 100 42 100 26C100 11 88 0 73 0C62 0 54 5 50 13Z" fill="#fdf0fd" transform="translate(574.35 127.80) scale(0.5250 0.5250)"/><path d="M50 13C46 5 38 0 27 0C12 0 0 11 0 26C0 42 14 52 30 62C40 68 47 74 50 80C53 74 60 68 70 62C86 52 100 42 100 26C100 11 88 0 73 0C62 0 54 5 50 13Z" fill="#fdf0fd" transform="translate(651.65 132.10) scale(0.3430 0.3375)"/><rect x="404.500" y="157" width="4" height="15" fill="#fdf0fd"/><rect x="667.500" y="158" width="3" height="14" fill="#bfe0e0"/><rect x="242" y="170.500" width="566" height="367" rx="34" fill="#fff" stroke="#cfe2e2" stroke-width="2.5"/><g transform="translate(718 470) scale(1.15)"><ellipse cx="0" cy="42" rx="22" ry="5" fill="#dcdcdc"/><circle cx="-2" cy="-28" r="9" fill="#e8e8e8" stroke="#9a9a9a" stroke-width="3"/><circle cx="-2" cy="-30" r="3" fill="#444"/><path d="M-34-14l18 22M30-14l-16 22" stroke="#8a8a8a" stroke-width="5"/><path d="M0 -2C-4-12-26-14-26 2C-26 18-8 24 0 36C8 24 26 18 26 2C26-14 4-12 0-2z" fill="#e01818"/><path d="M-14 4c0-8 8-8 10-4" stroke="#ff8a8a" stroke-width="4" fill="none"/></g></g><rect x="32.500" y="390.5" width="104" height="78" fill="#066c6e" stroke="#000" stroke-width="1"/><g transform="translate(33 391) scale(0.17167 0.1711) translate(-225 -104)"><path d="M50 13C46 5 38 0 27 0C12 0 0 11 0 26C0 42 14 52 30 62C40 68 47 74 50 80C53 74 60 68 70 62C86 52 100 42 100 26C100 11 88 0 73 0C62 0 54 5 50 13Z" fill="#fdf0fd" transform="translate(337.15 155.90) scale(0.2450 0.2450)"/><path d="M50 13C46 5 38 0 27 0C12 0 0 11 0 26C0 42 14 52 30 62C40 68 47 74 50 80C53 74 60 68 70 62C86 52 100 42 100 26C100 11 88 0 73 0C62 0 54 5 50 13Z" fill="#fdf0fd" transform="translate(379.80 118.20) scale(0.5100 0.5025)"/><path d="M50 13C46 5 38 0 27 0C12 0 0 11 0 26C0 42 14 52 30 62C40 68 47 74 50 80C53 74 60 68 70 62C86 52 100 42 100 26C100 11 88 0 73 0C62 0 54 5 50 13Z" fill="#fdf0fd" transform="translate(430.70 156.60) scale(0.5100 0.5100)"/><path d="M50 13C46 5 38 0 27 0C12 0 0 11 0 26C0 42 14 52 30 62C40 68 47 74 50 80C53 74 60 68 70 62C86 52 100 42 100 26C100 11 88 0 73 0C62 0 54 5 50 13Z" fill="#fdf0fd" transform="translate(503.25 151.30) scale(0.2950 0.2625)"/><path d="M50 13C46 5 38 0 27 0C12 0 0 11 0 26C0 42 14 52 30 62C40 68 47 74 50 80C53 74 60 68 70 62C86 52 100 42 100 26C100 11 88 0 73 0C62 0 54 5 50 13Z" fill="#fdf0fd" transform="translate(574.35 127.80) scale(0.5250 0.5250)"/><path d="M50 13C46 5 38 0 27 0C12 0 0 11 0 26C0 42 14 52 30 62C40 68 47 74 50 80C53 74 60 68 70 62C86 52 100 42 100 26C100 11 88 0 73 0C62 0 54 5 50 13Z" fill="#fdf0fd" transform="translate(651.65 132.10) scale(0.3430 0.3375)"/><rect x="404.500" y="157" width="4" height="15" fill="#fdf0fd"/><rect x="667.500" y="158" width="3" height="14" fill="#bfe0e0"/><rect x="242" y="170.500" width="566" height="367" rx="34" fill="#fff" stroke="#cfe2e2" stroke-width="2.5"/><g fill="#f8b8dc"><rect x="686" y="488" width="5" height="14"/><rect x="700" y="497" width="6" height="6"/><rect x="730" y="476" width="6" height="18"/><rect x="728" y="498" width="6" height="8"/><rect x="748" y="474" width="6" height="8"/><rect x="756" y="480" width="10" height="5"/><rect x="750" y="492" width="8" height="5"/></g></g><rect x="32.500" y="482.5" width="104" height="78" fill="#fff" stroke="#000" stroke-width="1"/><path d="M36 555.500v-66a3.500 3.500 0 0 1 3.500-3.500h91a3.500 3.500 0 0 1 3.500 3.500v66z" fill="#066c6e"/><circle cx="40.200" cy="490.3" r="1.500" fill="#fff"/><circle cx="129.200" cy="490.3" r="1.500" fill="#fff"/><rect x="53.6" y="529.8" width="1" height="31.0" fill="#f58ab4"/><rect x="110.1" y="533.0" width="1" height="27.8" fill="#f58ab4"/><rect x="129.4" y="532.3" width="1" height="28.5" fill="#f58ab4"/><rect x="86.0" y="537.2" width="1" height="23.6" fill="#f58ab4"/><rect x="44.8" y="543.7" width="1" height="17.1" fill="#f58ab4"/><rect x="96.7" y="544.0" width="1" height="16.8" fill="#f58ab4"/><rect x="56.1" y="545.3" width="1" height="15.5" fill="#f0609c"/><rect x="77.8" y="547.0" width="1" height="13.8" fill="#f58ab4"/><rect x="114.5" y="550.0" width="1" height="10.8" fill="#f58ab4"/><rect x="66.0" y="550.2" width="1" height="10.6" fill="#f0609c"/><rect x="126.9" y="552.0" width="1" height="8.8" fill="#f0609c"/><rect x="75.0" y="552.5" width="1" height="8.3" fill="#f0609c"/><path d="M50 13C46 5 38 0 27 0C12 0 0 11 0 26C0 42 14 52 30 62C40 68 47 74 50 80C53 74 60 68 70 62C86 52 100 42 100 26C100 11 88 0 73 0C62 0 54 5 50 13Z" fill="#f78db8" transform="translate(46.75 523.92) scale(0.1470 0.1470)"/><path d="M50 13C46 5 38 0 27 0C12 0 0 11 0 26C0 42 14 52 30 62C40 68 47 74 50 80C53 74 60 68 70 62C86 52 100 42 100 26C100 11 88 0 73 0C62 0 54 5 50 13Z" fill="#f78db8" transform="translate(61.15 534.52) scale(0.1470 0.1470)"/><path d="M50 13C46 5 38 0 27 0C12 0 0 11 0 26C0 42 14 52 30 62C40 68 47 74 50 80C53 74 60 68 70 62C86 52 100 42 100 26C100 11 88 0 73 0C62 0 54 5 50 13Z" fill="#f78db8" transform="translate(102.85 526.80) scale(0.1550 0.1550)"/><path d="M50 13C46 5 38 0 27 0C12 0 0 11 0 26C0 42 14 52 30 62C40 68 47 74 50 80C53 74 60 68 70 62C86 52 100 42 100 26C100 11 88 0 73 0C62 0 54 5 50 13Z" fill="#f78db8" transform="translate(125.00 528.38) scale(0.0980 0.0980)"/><path d="M50 13C46 5 38 0 27 0C12 0 0 11 0 26C0 42 14 52 30 62C40 68 47 74 50 80C53 74 60 68 70 62C86 52 100 42 100 26C100 11 88 0 73 0C62 0 54 5 50 13Z" fill="#f78db8" transform="translate(82.00 533.60) scale(0.0900 0.0900)"/><path d="M50 13C46 5 38 0 27 0C12 0 0 11 0 26C0 42 14 52 30 62C40 68 47 74 50 80C53 74 60 68 70 62C86 52 100 42 100 26C100 11 88 0 73 0C62 0 54 5 50 13Z" fill="#f78db8" transform="translate(40.80 540.10) scale(0.0900 0.0900)"/><path d="M50 13C46 5 38 0 27 0C12 0 0 11 0 26C0 42 14 52 30 62C40 68 47 74 50 80C53 74 60 68 70 62C86 52 100 42 100 26C100 11 88 0 73 0C62 0 54 5 50 13Z" fill="#f78db8" transform="translate(34.35 535.40) scale(0.0650 0.0650)"/><path d="M50 13C46 5 38 0 27 0C12 0 0 11 0 26C0 42 14 52 30 62C40 68 47 74 50 80C53 74 60 68 70 62C86 52 100 42 100 26C100 11 88 0 73 0C62 0 54 5 50 13Z" fill="#f78db8" transform="translate(93.10 540.72) scale(0.0820 0.0820)"/><path d="M50 13C46 5 38 0 27 0C12 0 0 11 0 26C0 42 14 52 30 62C40 68 47 74 50 80C53 74 60 68 70 62C86 52 100 42 100 26C100 11 88 0 73 0C62 0 54 5 50 13Z" fill="#f78db8" transform="translate(118.90 541.38) scale(0.0980 0.0980)"/><path d="M50 13C46 5 38 0 27 0C12 0 0 11 0 26C0 42 14 52 30 62C40 68 47 74 50 80C53 74 60 68 70 62C86 52 100 42 100 26C100 11 88 0 73 0C62 0 54 5 50 13Z" fill="#d9407e" transform="translate(52.60 542.10) scale(0.0800 0.0800)"/><path d="M50 13C46 5 38 0 27 0C12 0 0 11 0 26C0 42 14 52 30 62C40 68 47 74 50 80C53 74 60 68 70 62C86 52 100 42 100 26C100 11 88 0 73 0C62 0 54 5 50 13Z" fill="#d9407e" transform="translate(81.15 540.40) scale(0.0750 0.0750)"/><path d="M50 13C46 5 38 0 27 0C12 0 0 11 0 26C0 42 14 52 30 62C40 68 47 74 50 80C53 74 60 68 70 62C86 52 100 42 100 26C100 11 88 0 73 0C62 0 54 5 50 13Z" fill="#d9407e" transform="translate(44.25 548.60) scale(0.0750 0.0750)"/><path d="M50 13C46 5 38 0 27 0C12 0 0 11 0 26C0 42 14 52 30 62C40 68 47 74 50 80C53 74 60 68 70 62C86 52 100 42 100 26C100 11 88 0 73 0C62 0 54 5 50 13Z" fill="#d9407e" transform="translate(89.75 547.70) scale(0.0650 0.0650)"/><path d="M50 13C46 5 38 0 27 0C12 0 0 11 0 26C0 42 14 52 30 62C40 68 47 74 50 80C53 74 60 68 70 62C86 52 100 42 100 26C100 11 88 0 73 0C62 0 54 5 50 13Z" fill="#f78db8" transform="translate(75.05 544.40) scale(0.0650 0.0650)"/><path d="M50 13C46 5 38 0 27 0C12 0 0 11 0 26C0 42 14 52 30 62C40 68 47 74 50 80C53 74 60 68 70 62C86 52 100 42 100 26C100 11 88 0 73 0C62 0 54 5 50 13Z" fill="#d9407e" transform="translate(34.90 547.40) scale(0.0500 0.0500)"/><path d="M50 13C46 5 38 0 27 0C12 0 0 11 0 26C0 42 14 52 30 62C40 68 47 74 50 80C53 74 60 68 70 62C86 52 100 42 100 26C100 11 88 0 73 0C62 0 54 5 50 13Z" fill="#d9407e" transform="translate(102.00 545.80) scale(0.0500 0.0500)"/><path d="M50 13C46 5 38 0 27 0C12 0 0 11 0 26C0 42 14 52 30 62C40 68 47 74 50 80C53 74 60 68 70 62C86 52 100 42 100 26C100 11 88 0 73 0C62 0 54 5 50 13Z" fill="#d9407e" transform="translate(114.80 542.50) scale(0.0500 0.0500)"/><path d="M50 13C46 5 38 0 27 0C12 0 0 11 0 26C0 42 14 52 30 62C40 68 47 74 50 80C53 74 60 68 70 62C86 52 100 42 100 26C100 11 88 0 73 0C62 0 54 5 50 13Z" fill="#f78db8" transform="translate(112.15 547.72) scale(0.0570 0.0570)"/><path d="M50 13C46 5 38 0 27 0C12 0 0 11 0 26C0 42 14 52 30 62C40 68 47 74 50 80C53 74 60 68 70 62C86 52 100 42 100 26C100 11 88 0 73 0C62 0 54 5 50 13Z" fill="#f78db8" transform="translate(58.75 551.22) scale(0.0570 0.0570)"/><path d="M50 13C46 5 38 0 27 0C12 0 0 11 0 26C0 42 14 52 30 62C40 68 47 74 50 80C53 74 60 68 70 62C86 52 100 42 100 26C100 11 88 0 73 0C62 0 54 5 50 13Z" fill="#d9407e" transform="translate(64.50 548.60) scale(0.0400 0.0400)"/><path d="M50 13C46 5 38 0 27 0C12 0 0 11 0 26C0 42 14 52 30 62C40 68 47 74 50 80C53 74 60 68 70 62C86 52 100 42 100 26C100 11 88 0 73 0C62 0 54 5 50 13Z" fill="#d9407e" transform="translate(124.55 549.72) scale(0.0570 0.0570)"/><path d="M50 13C46 5 38 0 27 0C12 0 0 11 0 26C0 42 14 52 30 62C40 68 47 74 50 80C53 74 60 68 70 62C86 52 100 42 100 26C100 11 88 0 73 0C62 0 54 5 50 13Z" fill="#d9407e" transform="translate(129.50 542.90) scale(0.0400 0.0400)"/><path d="M50 13C46 5 38 0 27 0C12 0 0 11 0 26C0 42 14 52 30 62C40 68 47 74 50 80C53 74 60 68 70 62C86 52 100 42 100 26C100 11 88 0 73 0C62 0 54 5 50 13Z" fill="#d9407e" transform="translate(73.00 550.50) scale(0.0500 0.0500)"/><path d="M50 13C46 5 38 0 27 0C12 0 0 11 0 26C0 42 14 52 30 62C40 68 47 74 50 80C53 74 60 68 70 62C86 52 100 42 100 26C100 11 88 0 73 0C62 0 54 5 50 13Z" fill="#d9407e" transform="translate(98.25 553.20) scale(0.0450 0.0450)"/><path d="M50 13C46 5 38 0 27 0C12 0 0 11 0 26C0 42 14 52 30 62C40 68 47 74 50 80C53 74 60 68 70 62C86 52 100 42 100 26C100 11 88 0 73 0C62 0 54 5 50 13Z" fill="#d9407e" transform="translate(40.00 554.40) scale(0.0400 0.0400)"/><path d="M50 13C46 5 38 0 27 0C12 0 0 11 0 26C0 42 14 52 30 62C40 68 47 74 50 80C53 74 60 68 70 62C86 52 100 42 100 26C100 11 88 0 73 0C62 0 54 5 50 13Z" fill="#d9407e" transform="translate(119.50 553.90) scale(0.0400 0.0400)"/><g fill="#d8ecec" opacity=".45"><rect x="116" y="517.5" width="1" height="3"/><rect x="125" y="519" width="5" height="1"/><rect x="127" y="518" width="1" height="3"/><rect x="109.500" y="523.5" width="12" height="1.200"/></g><g fill="#fff"><rect x="69.500" y="511.8" width="26.500" height="1.300"/><rect x="69.500" y="510.3" width="3" height="3.300"/><rect x="74" y="510.3" width="6" height="3.300" opacity=".8"/><rect x="83" y="510.3" width="4" height="3.300" opacity=".8"/><rect x="89" y="510.3" width="2" height="3.300"/><rect x="93" y="510.3" width="3" height="3.300" opacity=".8"/></g></svg>
<span class="t" style="left:14px;top:118px;font-family:'Liberation Serif';font-weight:bold;font-size:13px">1</span>
<span class="t" style="left:14.6px;top:212px;font-family:'Liberation Sans';font-weight:bold;font-size:11.5px">2</span>
<span class="t" style="left:14.6px;top:304px;font-family:'Liberation Sans';font-weight:bold;font-size:11.5px">3</span>
<span class="t" style="left:14.8px;top:394px;font-family:'Liberation Serif';font-weight:bold;font-size:13px">4</span>
<span class="t" style="left:14.6px;top:488px;font-family:'Liberation Sans';font-weight:bold;font-size:11.5px">5</span>
<svg class="a" style="left:0px;top:0px;" width="917" height="90" viewBox="0 0 917 90"><defs><linearGradient id="pg" x1="0" y1="0" x2="1" y2="1"><stop offset="0" stop-color="#fff"/><stop offset=".55" stop-color="#f4f6fa"/><stop offset="1" stop-color="#b9c3d6"/></linearGradient><linearGradient id="gold" x1="0" y1="0" x2="1" y2="1"><stop offset="0" stop-color="#f6d27a"/><stop offset="1" stop-color="#c48a1c"/></linearGradient><linearGradient id="grn" x1="0" y1="0" x2="1" y2="1"><stop offset="0" stop-color="#a8e09a"/><stop offset="1" stop-color="#3c9a3c"/></linearGradient></defs><path d="M23.500 65.500h7l3.500 3.500v9.500h-10.500z" fill="url(#pg)" stroke="#5a6a88" stroke-width="1"/><path d="M30.500 65.500v3.500h3.500" fill="#e8edf6" stroke="#5a6a88" stroke-width="1"/><path d="M24.500 79.200h10.200v-9.500" fill="none" stroke="#3a4864" stroke-width="1.200" opacity=".75"/><path d="M50.500 65.500h5l3 3v7h-8z" fill="#fff" stroke="#5a78b4" stroke-width="1"/><path d="M52 68.500h4M52 70.500h5M52 72.500h5" stroke="#7c9cd8" stroke-width="1"/><path d="M56.500 69.500h5l3.500 3.500v5h-8.500z" fill="#fff" stroke="#2c4c94" stroke-width="1"/><path d="M61.500 69.500v3.500h3.500" fill="#dfe9fb" stroke="#2c4c94" stroke-width="1"/><path d="M58 73.500h3M58 75.500h5" stroke="#4c74d0" stroke-width="1"/><rect x="73.500" y="67" width="11.500" height="11.500" rx="1" fill="url(#gold)" stroke="#8a6210" stroke-width="1"/><rect x="76.500" y="65.500" width="5.500" height="3" rx="1" fill="#d8d8d8" stroke="#6a5a3a" stroke-width="1"/><path d="M81.500 72.500h5l2.500 2.500v4h-7.500z" fill="#f4f4f4" stroke="#6c6c6c" stroke-width="1"/><path d="M83 75.500h3M83 77.500h4" stroke="#9a9a9a" stroke-width="1"/><path d="M43.500 65v14" stroke="#6a8ccb"/><path d="M44.500 66v14" stroke="#f1f9ff"/><path d="M426 66.500h14" stroke="#000" stroke-width="1.100"/><path d="M426 68.500h9" stroke="#000" stroke-width="1.100"/><path d="M426 70.500h14" stroke="#000" stroke-width="1.100"/><path d="M426 72.500h9" stroke="#000" stroke-width="1.100"/><path d="M426 74.500h14" stroke="#000" stroke-width="1.100"/><path d="M426 76.500h9" stroke="#000" stroke-width="1.100"/><path d="M449 66.500h14" stroke="#000" stroke-width="1.100"/><path d="M451.500 68.500h9" stroke="#000" stroke-width="1.100"/><path d="M449 70.500h14" stroke="#000" stroke-width="1.100"/><path d="M451.500 72.500h9" stroke="#000" stroke-width="1.100"/><path d="M449 74.500h14" stroke="#000" stroke-width="1.100"/><path d="M451.500 76.500h9" stroke="#000" stroke-width="1.100"/><path d="M472 66.500h14" stroke="#000" stroke-width="1.100"/><path d="M477 68.500h9" stroke="#000" stroke-width="1.100"/><path d="M472 70.500h14" stroke="#000" stroke-width="1.100"/><path d="M477 72.500h9" stroke="#000" stroke-width="1.100"/><path d="M472 74.500h14" stroke="#000" stroke-width="1.100"/><path d="M477 76.500h9" stroke="#000" stroke-width="1.100"/><g stroke="#7f99cc" fill="none" stroke-width="1"><path d="M494.500 64v15M509.500 64v15M496 66.500h12M498.500 64.500l-2.500 2 2.500 2M505.500 64.500l2.500 2-2.500 2"/><path d="M497 70.500h10M497 72.500h10M497 74.500h10M497 76.500h10M497 78.500h10"/></g><g stroke="#7f99cc" fill="none" stroke-width="1"><path d="M518.500 64v14M522.500 64v14M526.500 72v6M530.500 72v6"/><path d="M517 76.500l1.500 2 1.500-2M521 76.500l1.500 2 1.500-2M525 76.500l1.500 2 1.500-2M529 76.500l1.500 2 1.500-2"/></g><text x="524.300" y="71" font-family="Liberation Serif" font-size="9.500" fill="#7f99cc">A</text><g stroke="#6f8cc8" stroke-width="1"><path d="M552 66.500h9M552 71.500h9M552 76.500h9M575.500 66.500h8M575.500 71.500h8M575.500 76.500h8"/></g><g fill="#9aa4b8" font-family="Liberation Sans" font-size="5.500"><text x="546.500" y="68.500">1</text><text x="546.500" y="73.500">2</text><text x="546.500" y="78.500">3</text></g><g fill="#9aa4b8"><circle cx="571.500" cy="66.500" r="1.200"/><circle cx="571.500" cy="71.500" r="1.200"/><circle cx="571.500" cy="76.500" r="1.200"/></g><text x="598.500" y="77.600" font-family="Liberation Serif" font-weight="bold" font-size="15.500" fill="#1a1a1a">A</text><path d="M608.500 67.500l2.500-3 2.500 3z" fill="#2c52b4"/><text x="622.300" y="77.600" font-family="Liberation Serif" font-weight="bold" font-size="11" fill="#1a1a1a">A</text><path d="M630 66l2.500 3 2.500-3z" fill="#2c52b4"/><g stroke="#7f99cc" stroke-width="1" fill="none"><path d="M657.500 65v14" stroke-dasharray="1 1"/><path d="M658 66.500h8M658 68.500h6M658 70.500h8M652 73.500h14M652 75.500h14M652 77.500h10"/><path d="M656.500 68.500h-6M653 66l-2.500 2.500 2.500 2.500" stroke="#9fb4de"/></g><g stroke="#7f99cc" stroke-width="1" fill="none"><path d="M680.500 65v14" stroke-dasharray="1 1"/><path d="M681 66.500h8M681 68.500h6M681 70.500h8M675 73.500h14M675 75.500h14M675 77.500h10"/><path d="M673.500 68.500h6M677 66l2.500 2.500-2.500 2.500" stroke="#9fb4de"/></g><text x="704.300" y="75" font-family="Liberation Serif" font-weight="bold" font-size="15.500" fill="#2c4a9e">A</text><rect x="702" y="75.700" width="16.300" height="3.800" fill="#000"/><path d="M724 71.500h5l-2.500 3z" fill="#000"/><rect x="743.500" y="68.500" width="11" height="8" fill="#fff" stroke="#33415e" stroke-width="1"/><path d="M745 71.500h5M745 73.500h7" stroke="#5878c0"/><path d="M744 77.600h11.500v-8" fill="none" stroke="#33415e" stroke-width="1" opacity=".6"/><path d="M751 74l3.500-4.500 2 1.500-3.500 4.500z" fill="#3c68c8"/><path d="M754.500 69.500l2.500-3.500 2 1.500-2.500 3.500z" fill="#f0c040" stroke="#a07818" stroke-width=".5"/><rect x="811.500" y="68.500" width="9.500" height="8" fill="#fff" stroke="#33415e" stroke-width="1"/><path d="M812 77.600h10v-8" fill="none" stroke="#33415e" opacity=".6"/><path d="M815 71.500h4" stroke="#8aa4d8"/><path d="M810 63.500v8M806 67.500h8M807.200 64.700l5.600 5.600M812.800 64.700l-5.600 5.600" stroke="#f0c820" stroke-width="1.300"/><circle cx="810" cy="67.500" r="1.600" fill="#fff6a8"/><g font-family="Liberation Serif" font-weight="bold" fill="#000"><text x="329.600" y="76.200" font-size="14">B</text><text x="354" y="76.200" font-size="14" font-style="italic">I</text><text x="375.800" y="75.400" font-size="12.500">U</text><text x="400.8" y="77" font-size="12.5" fill="#8a92a8" font-family="Liberation Sans">S</text><text x="399.8" y="76" font-size="12.5" font-family="Liberation Sans">S</text></g><path d="M376 77.500h9.500" stroke="#000" stroke-width="1"/></svg>
<svg class="a" style="left:0px;top:0px;pointer-events:none" width="917" height="676" viewBox="0 0 917 676"><path d="M81.500 625.500v11l2.600-2.500 2 4.200 1.700-.8-2-4.100h3.400z" fill="#fff" stroke="#44609c" stroke-width="1" stroke-linejoin="round"/><path d="M189.200 626.200l10.600 10.500" stroke="#000" stroke-width="1.300"/><path d="M213 627l8 8" stroke="#000" stroke-width="1.300"/><path d="M223 637l-5.500-1.800 3.700-3.700z" fill="#000"/><rect x="233.600" y="627.100" width="15" height="10" fill="none" stroke="#000" stroke-width="1.300"/><ellipse cx="263.900" cy="632.100" rx="7.700" ry="5.300" fill="none" stroke="#000" stroke-width="1.200"/><rect x="279.500" y="625.500" width="14" height="12" fill="#fff" stroke="#7c8cac" stroke-width="1"/><path d="M286 628.500h6M286 630.500h6M281.500 632.500h10.500M281.500 634.500h10.500" stroke="#8aa4dc"/><text x="280.800" y="631.500" font-family="Liberation Sans" font-weight="bold" font-size="6.500" fill="#000">A</text><rect x="302.500" y="625.500" width="14.500" height="12" fill="#fff" stroke="#7c8cac" stroke-width="1"/><path d="M304.500 627v9M306.500 627v9M308.500 627v9M310.500 633v3.500M312.500 633v3.500M314.500 633v3.500" stroke="#8a94ac"/><text x="310.200" y="632" font-family="Liberation Sans" font-weight="bold" font-size="6.500" fill="#000">A</text><defs><linearGradient id="wag" x1="0" y1="0" x2="1" y2="0"><stop offset="0" stop-color="#8fb0f2"/><stop offset="1" stop-color="#1f48b8"/></linearGradient></defs><path d="M336.200 624.300L325 634.300l2.100 1.400 2.900-1.200 1 2-1.400 1.200 5.300.8v-1.800l-1.400-1.100 1.700-1.500v-2.300l-3.300.5 3.300-3.100z" fill="#2a5acc"/><path d="M336 624.600l4.300-.6v13.600l.9.900h-6.500l1.300-.9z" fill="url(#wag)"/><path d="M336.600 625v12.500" stroke="#b4ccf8" stroke-width=".8"/><g fill="none" stroke="#3c4c6c" stroke-width="1.100"><path d="M352.300 626.300c1.800-1.200 3.800-1.200 5.400 0"/><path d="M350 633.300c-.2 1.800.6 3.200 2 4"/><path d="M360.600 633.200c0 1.800-.8 3.200-2.200 4.200"/></g><path d="M358.400 625.300v3h-3z" fill="#3c4c6c"/><path d="M348.400 634.300l1.600-2.600 1.600 2.600z" fill="#3c4c6c"/><path d="M357.300 635.300l.2 3 2.800-1z" fill="#3c4c6c"/><circle cx="350.200" cy="629.800" r="1.900" fill="#f0dc3c"/><circle cx="350.700" cy="630.300" r=".9" fill="#8a7a10" opacity=".6"/><circle cx="360" cy="629.600" r="1.900" fill="#dc5030"/><circle cx="360.500" cy="630.100" r=".9" fill="#7a2010" opacity=".6"/><circle cx="355.100" cy="637.700" r="1.900" fill="#7070e8"/><circle cx="355.600" cy="638.200" r=".9" fill="#20207a" opacity=".6"/><rect x="372.800" y="625.500" width="12.700" height="12.700" fill="#fff" stroke="#1c3c84" stroke-width="1.200"/><circle cx="379.200" cy="630" r="2.700" fill="#7c7c7c"/><path d="M375 637.500c0-3.500 2-4.500 4.200-4.500s4.200 1 4.200 4.500z" fill="#e06c1c"/><rect x="395.800" y="625.500" width="12.900" height="12.700" fill="#fff" stroke="#1c3c84" stroke-width="1.200"/><path d="M396.500 637.500l4.500-6 3 3.500 1.500-1.500 2.700 3v1z" fill="#6c7c94"/><path d="M396.500 637.500l4.500-6 2 2.500-3 3.500z" fill="#c4cce0"/><circle cx="404.800" cy="629" r="1.700" fill="#f08428"/><path d="M424.500 631l5.500-5.500 5.500 5.500-5.500 4.500z" fill="#fff" stroke="#2c3c5c" stroke-width="1"/><path d="M430 624v5" stroke="#2c3c5c"/><path d="M435 630.500c2.500 0 3.500 1.800 3.500 4.500-1.500-1.500-2.500-2-4.500-2z" fill="#3c6cd0"/><rect x="423" y="636.200" width="16" height="3.500" fill="#5b8cd0"/><path d="M444.800 631.500h5l-2.500 3z" fill="#000"/><path d="M468 625.500l3 2-5.500 5-2-1.500z" fill="#e8b838" stroke="#8a6a1c" stroke-width=".5"/><path d="M463.500 631l2 1.500c-1 2-4 3-7.500 2.500 2.500-.5 3.500-2 5.500-4z" fill="#3c6cd0"/><path d="M457 634.500h3" stroke="#2c4c9c"/><rect x="457" y="636.200" width="16" height="3.500" fill="#000"/><path d="M479 631.500h5l-2.500 3z" fill="#000"/><text x="493.200" y="635" font-family="Liberation Serif" font-weight="bold" font-size="15.500" fill="#2c4a9e">A</text><rect x="491" y="636.200" width="16" height="3.500" fill="#000"/><path d="M512.800 631.500h5l-2.500 3z" fill="#000"/><path d="M525 627.500h15.500" stroke="#000" stroke-width="1"/><path d="M525 631h15.500" stroke="#000" stroke-width="2"/><path d="M525 635.500h15.500" stroke="#000" stroke-width="3"/><path d="M548 627.500h15.500" stroke="#000"/><path d="M548 630.500h15.500" stroke="#000" stroke-dasharray="1 1"/><path d="M548 633.500h15.500" stroke="#000" stroke-dasharray="2 1"/><path d="M548 636.500h15.500" stroke="#000" stroke-dasharray="3 1 1 1"/><g stroke="#000" stroke-width="1.100" fill="none"><path d="M571.500 626.500h14M582.500 624l3 2.500-3 2.500"/><path d="M571.500 631.500h14M574.500 629l-3 2.500 3 2.500"/><path d="M571.500 636.500h14M574.500 634l-3 2.500 3 2.500M582.500 634l3 2.500-3 2.500"/></g><rect x="597.200" y="627.200" width="10" height="10" fill="#5a6272" opacity=".8"/><rect x="595.200" y="625.200" width="10" height="10" fill="url(#grn)" stroke="#2c7c2c" stroke-width=".6"/><path d="M618 628.500l3.500-3.500h10.500v10l-3.500 3.500h-10.500z" fill="#3c8c3c"/><rect x="618" y="628.500" width="10.500" height="10" fill="url(#grn)"/><path d="M618 628.500l3.500-3.500h10.500l-3.500 3.500z" fill="#c0e8b4"/></svg>
</div>
</body></html>
